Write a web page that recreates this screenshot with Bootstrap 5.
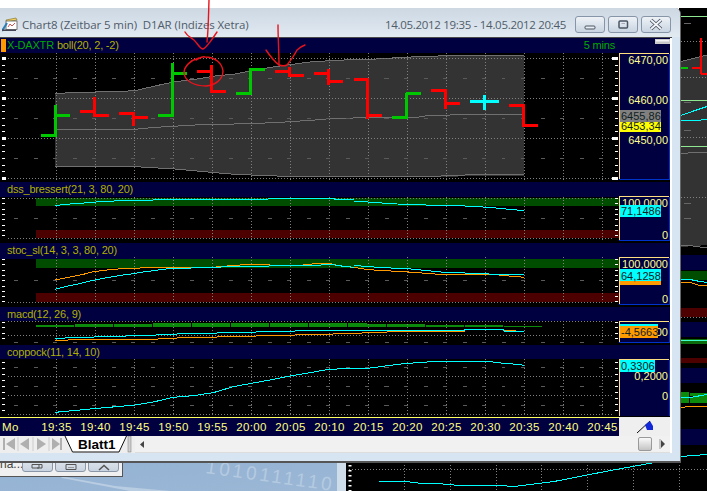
<!DOCTYPE html>
<html lang="de">
<head>
<meta charset="utf-8">
<title>Chart8</title>
<link rel="stylesheet" href="https://cdn.jsdelivr.net/npm/bootstrap@5.3.0/dist/css/bootstrap.min.css">
<style>
html,body{margin:0;background:#fff;}
.scene{position:relative;width:707px;height:491px;overflow:hidden;font-family:"Liberation Sans",sans-serif;font-size:11px;}
.backdrop{position:absolute;left:0;top:0;width:707px;height:491px;}
.oldwin{position:absolute;left:0;top:445px;width:123px;height:32px;background:#f0f0f0;border-right:1px solid #555;border-bottom:1px solid #555;color:#444;font-size:12px;gap:2px;padding-bottom:4px;}
.oldname{width:20px;line-height:14px;margin-bottom:1px;}
.oldbtn{width:31px;height:24px;border:1px solid #8a97a8;border-radius:0 0 3px 3px;background:linear-gradient(#f4f6f9,#c9d4e0);}
.mainwin{position:absolute;left:0;top:8px;width:681px;height:455px;background:#d7e4f1;border-right:1px solid #666;border-bottom:2px solid #555;border-top-right-radius:6px;}
.capbar{height:29px;padding:4px 9px 0 2px;background:linear-gradient(#cdd8e3,#e1e9f1);color:#4f5c69;font-family:"Open Sans",sans-serif;font-size:11.5px;border-top-right-radius:6px;}
.captxt{white-space:pre;letter-spacing:-.1px;}
.capdate{white-space:pre;letter-spacing:-.3px;margin-right:9px;margin-left:auto;}
.capbtns{gap:3px;}
.capbtn{width:30px;height:17px;padding:0;line-height:0;border:1px solid #8795a8;border-radius:3px;background:linear-gradient(#eef2f6,#c9d5e2);}
.capbtn:hover{border-color:#8795a8;background:#dfe6ee;}
.client{width:672px;background:#fff;padding-right:2px;border-top:1px solid #4a4a4a;}
.chart{background:#000;width:670px;}
.phead{background:#000040;color:#b0b000;padding-left:7px;letter-spacing:-.2px;white-space:nowrap;}
.h15{height:15px;line-height:15px;}
.h14{height:14px;line-height:14px;}
.flagmark{width:5px;height:13px;background:#ff9a00;margin:0 1px 0 -6px;}
.gtxt{color:#00aa00;}
.bolltxt{margin-left:3px;}
.minibtn{width:15px;height:5px;margin:1px 0 0 40px;background:linear-gradient(#fff,#bbb);border:1px solid #ccc;}
.timerow{height:19px;}
.timeaxis{width:619px;background:#000040;border-top:1px solid #ffff60;color:#ffff80;padding-top:2px;overflow:hidden;letter-spacing:.35px;font-size:11.5px;line-height:14px;}
.timeaxis span{flex:0 0 39px;text-align:center;}
.timeaxis .mo{flex:0 0 37px;text-align:left;padding-left:2px;}
.corner{width:51px;background:#efefef;}
.tabrow{height:17px;background:#eee;width:670px;}
.track{background:#f1f1f1;border-bottom:1px solid #ddd;}
.thumb{width:14px;height:14px;border:1px solid #999;border-radius:2px;background:linear-gradient(#fafafa,#c4c4c4);margin-right:6px;}
svg{display:block;}
.plot text,.axis text{font-family:"Liberation Sans",sans-serif;font-size:11px;}
.vg{stroke:#808080;stroke-dasharray:1 2;fill:none;}
.dh{stroke:#5a5a5a;stroke-dasharray:4 15.5;fill:none;}
.tk{stroke:#fff;stroke-width:3;fill:none;}
.ln{fill:none;stroke-width:1;vector-effect:non-scaling-stroke;}
.cy{stroke:#00ffff;}
.or{stroke:#ff9a00;}
.gy{stroke:#707070;}
.bar{fill:none;stroke-width:3;}
.rd{stroke:#ff0000;}
.gn{stroke:#00c800;}
.cb{stroke:#00ffff;}
.lbl{fill:#ffff90;text-anchor:end;}
.dk{fill:#102020;}
.hand{fill:none;stroke:#e8141c;stroke-width:1.4;stroke-linecap:round;stroke-linejoin:round;}
.anno{position:absolute;left:0;top:0;width:707px;height:491px;pointer-events:none;}
</style>
</head>
<body>
<div class="scene">

<svg class="backdrop" viewBox="0 0 707 491" aria-hidden="true">
  <defs><linearGradient id="wall" x1="0" y1="0" x2="1" y2="1"><stop offset="0" stop-color="#93b2d3"/><stop offset="1" stop-color="#9cb7d6"/></linearGradient></defs>
  <rect x="0" y="462" width="340" height="29" fill="url(#wall)"/>
  <path d="M60 476L115 486L170 491H130L62 478Z" fill="#b9cde2"/>
  <text x="205" y="473" font-family="Liberation Sans" font-size="19" fill="#b4cae0" letter-spacing="3" transform="rotate(8 205 473)">1010111110</text>
  <rect x="337" y="462" width="10" height="29" fill="#cfdce9"/>
  <rect x="346" y="462" width="361" height="29" fill="#000"/>
  <path d="M349 469.500H707" class="vg"/>
  <path d="M404.500 462V491M450.500 462V491M496.500 462V491M541.500 462V491M587.500 462V491M633.500 462V491M679.500 462V491" class="vg"/>
  <path d="M350 465V491" class="tk" stroke-dasharray="1.500 3.500"/>
  <path d="M379 481.500H406L422 483.500H437L460 485.500H500L514 486.500L530 484.500L554 481.500L587 475L624 468L652 463L670 461" class="cy" fill="none" shape-rendering="crispEdges"/>
  <rect x="679" y="8" width="28" height="454" fill="#000"/>
  <g shape-rendering="crispEdges">
    <path d="M681 61.500L707 55V245L681 247Z" fill="#333"/>
    <path d="M681 61.500L707 55" class="gy"/>
    <path d="M681 153.500L696 152.500H707" class="gy"/>
    <path d="M681 245.500H690L700 247H707" class="gy"/>
    <path d="M681 41.500H707M681 77.500H707M681 137.500H707M681 197.500H707" class="vg"/>
    <path d="M684 23.500H691M684 102.500H691M684 130.500H691M684 203.500H691M684 218.500H691" stroke="#666"/>
    <path d="M681 16.500H707M681 100.500H707M681 146.500H707" stroke="#90e890"/>
    <path d="M681 115.500L695 110.500L707 106.500" class="cy"/>
    <path d="M681 120.500H695L707 119.500" class="cy"/>
    <path d="M681 68H688" stroke="#00c800" stroke-width="2"/>
    <path d="M692 68H701M701 38V74M701 74H707" stroke="#f00" stroke-width="2" fill="none"/>
    <rect x="681" y="255" width="26" height="15" fill="#000040"/>
    <rect x="681" y="271" width="26" height="9" fill="#004d00"/>
    <path d="M681 279.500H690L700 281.500L707 282.500" class="cy"/>
    <path d="M681 282.500H690L700 285.500H707" class="or"/>
    <rect x="681" y="308" width="26" height="9" fill="#4d0000"/>
    <path d="M681 317.500H707" class="vg"/>
    <rect x="681" y="322" width="26" height="15" fill="#000040"/>
    <rect x="681" y="339" width="26" height="5" fill="#0b6a0b"/>
    <path d="M681 340.500H707" stroke="#40ffd0"/>
    <rect x="681" y="358" width="26" height="5" fill="#4d0000"/>
    <rect x="681" y="368" width="26" height="15" fill="#000040"/>
    <rect x="681" y="392" width="8" height="11" fill="#0b8a0b"/>
    <rect x="690" y="393" width="17" height="10" fill="#0b8a0b"/>
    <path d="M681 397.500H690L707 394.500" class="cy"/>
    <path d="M681 407.500L690 406.500H707" class="or"/>
    <rect x="681" y="429" width="26" height="16" fill="#000040"/>
    <path d="M681 456.500L707 454.500" class="cy"/>
  </g>
</svg>

<div class="oldwin d-flex align-items-end">
  <span class="oldname flex-shrink-0">na...</span>
  <span class="oldbtn flex-shrink-0 d-flex align-items-end justify-content-center"><svg width="14" height="7" viewBox="0 0 14 7"><path d="M1 .5H8V4H1ZM6 4H11V.5H8" fill="none" stroke="#555"/></svg></span>
  <span class="oldbtn flex-shrink-0 d-flex align-items-end justify-content-center"><svg width="12" height="7" viewBox="0 0 12 7"><path d="M1 .5H11V5.500H1Z" fill="none" stroke="#555"/><path d="M3 3.500H9" stroke="#999"/></svg></span>
  <span class="oldbtn flex-shrink-0 d-flex align-items-end justify-content-center"><svg width="12" height="7" viewBox="0 0 12 7"><path d="M1 6L6 1.500L11 6" fill="none" stroke="#555" stroke-width="1.500"/></svg></span>
</div>

<div class="mainwin d-flex flex-column">
  <div class="capbar d-flex align-items-center">
    <svg width="16" height="15" viewBox="0 0 16 15" class="me-1 flex-shrink-0">
      <path d="M4 3L14 1L15 3L5 5Z" fill="#f4d25a" stroke="#7b6a2a" stroke-width=".6"/>
      <rect x="4" y="4" width="11" height="8.500" fill="#fff" stroke="#5a5a5a" stroke-width=".8"/>
      <path d="M6 10L8 7L10 9L13 6" fill="none" stroke="#d04040" stroke-width=".9"/>
      <path d="M0 14L5 6" stroke="#2a7fb5" stroke-width="2"/>
      <rect x="0" y="12.500" width="14" height="1.500" fill="#445"/>
    </svg>
    <span class="captxt">Chart8 (Zeitbar 5 min)  D1AR (Indizes Xetra)</span>
    <span class="capdate">14.05.2012 19:35 - 14.05.2012 20:45</span>
    <div class="d-flex capbtns">
      <button class="btn capbtn" aria-label="min"><svg width="28" height="15" viewBox="0 0 28 15"><rect x="9" y="9" width="10" height="3" rx="1" fill="#e9eef4" stroke="#4a5563"/></svg></button>
      <button class="btn capbtn" aria-label="max"><svg width="28" height="15" viewBox="0 0 28 15"><rect x="10" y="4" width="8.500" height="7" rx="1" fill="none" stroke="#4a5563" stroke-width="1.500"/><path d="M12.500 6.500H16" stroke="#aab"/></svg></button>
      <button class="btn capbtn" aria-label="close"><svg width="28" height="15" viewBox="0 0 28 15"><path d="M9 3L19 12M19 3L9 12" stroke="#4a5563" stroke-width="3.600"/><path d="M9 3L19 12M19 3L9 12" stroke="#f3f5f8" stroke-width="1.800"/></svg></button>
    </div>
  </div>

  <div class="client">
    <div class="chart">
      <!-- pane 1 -->
      <div class="phead h15 d-flex">
        <span class="flagmark align-self-center flex-shrink-0"></span>
        <span class="gtxt">X-DAXTR</span><span class="bolltxt">boll(20, 2, -2)</span>
        <span class="gtxt ms-auto">5 mins</span>
        <span class="minibtn flex-shrink-0"></span>
      </div>
      <div class="d-flex">
        <svg class="plot flex-shrink-0" width="619" height="129" viewBox="0 53 619 129" shape-rendering="crispEdges">
          <g transform="scale(.33333)">
            <path d="M165 280L225 278L285 276L345 275L405 272L465 258L525 245L585 238L645 228L705 222L765 210L825 200L885 192L945 184L1005 182L1062 178L1131 177L1191 173L1276 169L1396 166L1572 166V529H1396L1276 532L1062 530L825 528L705 523L645 518L525 507L405 500H165Z" fill="#333"/>
            <path class="ln gy" d="M165 280L225 278L285 276L345 275L405 272L465 258L525 245L585 238L645 228L705 222L765 210L825 200L885 192L945 184L1005 182L1062 178L1131 177L1191 173L1276 169L1396 166L1572 166"/>
            <path class="ln gy" d="M165 388H405L465 382L585 375L705 372L825 368L945 360L1000 355L1062 354H1240L1276 348L1350 345H1572"/>
            <path class="ln gy" d="M165 500H405L525 507L645 518L705 523L825 528L1062 530H1276L1396 525H1572"/>
          </g>
          <g>
            <path class="vg" d="M56.500 53V182M95.500 53V182M134.500 53V182M173.500 53V182M212.500 53V182M251.500 53V182M290.500 53V182M329.500 53V182M368.500 53V182M407.500 53V182M446.500 53V182M485.500 53V182M524.500 53V182M563.500 53V182M602.500 53V182"/>
            <path class="vg" d="M8 58.500H614M8 98.500H614M8 138.500H614M8 178.500H614"/>
            <path class="dh" d="M14 78.500H612M14 118.500H612M14 158.500H612"/>
            <path class="tk" stroke-dasharray="1 5.670" d="M3.500 58V179M616 58V179"/>
            <path class="tk" d="M2 58.500H6M2 98.500H6M2 138.500H6M2 178.500H6M612 58.500H618M612 98.500H618M612 138.500H618M612 178.500H618" stroke-width="1"/>
            <path class="bar gn" d="M41 135.300H55.300M55.300 105V137M55.300 115.300H70"/>
            <path class="bar rd" d="M80 111.300H94.700M94.700 97V117M94.700 115.300H109"/>
            <path class="bar rd" d="M119 113.300H133.300M133.300 111.700V126M133.300 117.300H148"/>
            <path class="bar gn" d="M158 115.300H172.300M172.300 63V116.700M172.300 73H187"/>
            <path class="bar rd" d="M197 71.300H211.700M211.700 65V93M211.700 91.300H226"/>
            <path class="bar gn" d="M236 93.700H250.300M250.300 68.300V94.500M250.300 69.300H265"/>
            <path class="bar rd" d="M275 71.300H289.300M289.300 67.300V77.300M289.300 75.300H304"/>
            <path class="bar rd" d="M314 73.300H328.300M328.300 69.300V85.300M328.300 81.300H343"/>
            <path class="bar rd" d="M354 79.300H367.700M367.700 78.300V119.300M367.700 115.300H382"/>
            <path class="bar gn" d="M392 117.300H406.300M406.300 93.300V119.300M406.300 93.300H421"/>
            <path class="bar rd" d="M431 90.700H445.300M445.300 89.300V109.300M445.300 103.300H460"/>
            <path class="bar cb" d="M470 101.300H499M484.300 95.300V110"/>
            <path class="bar rd" d="M509 105.300H523.700M523.700 104.300V126.700M523.700 125.300H538"/>
          </g>
        </svg>
        <svg class="axis flex-shrink-0" width="51" height="129" viewBox="619 53 51 129" shape-rendering="crispEdges">
          <rect x="619" y="53" width="51" height="126.500" fill="#000040"/>
          <path d="M619.500 53.500H669M619.500 53V179" stroke="#ffdf80" fill="none"/>
          <path d="M669.500 54V179M619 179H670" stroke="#0033cc" fill="none"/>
          <text class="lbl" x="668" y="63.500">6470,00</text>
          <text class="lbl" x="668" y="103.500">6460,00</text>
          <text class="lbl" x="668" y="143.500">6450,00</text>
          <rect x="620" y="109.500" width="41" height="12.500" fill="#808080"/>
          <text class="dk" x="621" y="120">6455,86</text>
          <rect x="620" y="122" width="41" height="10" fill="#ffff00"/>
          <text class="dk" x="621" y="130">6453,34</text>
        </svg>
      </div>

      <!-- pane 2 -->
      <div class="phead h14">dss_bressert(21, 3, 80, 20)</div>
      <div class="d-flex">
        <svg class="plot flex-shrink-0" width="619" height="47" viewBox="0 196 619 47" shape-rendering="crispEdges">
          <rect x="0" y="196" width="619" height="1" fill="#000040"/>
          <rect x="36" y="198" width="583" height="8" fill="#004d00"/>
          <rect x="36" y="230" width="583" height="7.500" fill="#4d0000"/>
          <path class="vg" d="M56.500 197V240M95.500 197V240M134.500 197V240M173.500 197V240M212.500 197V240M251.500 197V240M290.500 197V240M329.500 197V240M368.500 197V240M407.500 197V240M446.500 197V240M485.500 197V240M524.500 197V240M563.500 197V240M602.500 197V240"/>
          <path class="vg" d="M8 198.500H614M8 238.500H614"/>
          <path class="dh" d="M14 218.500H612"/>
          <path class="tk" stroke-dasharray="1 4.300" d="M3.500 198V239M616 198V239"/>
          <g transform="translate(0 180) scale(.33333)"><path class="ln cy" d="M165 77L195 73L225 71L265 68L312 64L372 62L460 60L520 58H640L810 57L925 56H1005V60H1062"/></g>
          <g transform="translate(354 180) scale(.33333)"><path class="ln cy" d="M0 63L70 68L130 72L215 75L333 78L405 82L435 85L465 88L511 92"/></g>
        </svg>
        <svg class="axis flex-shrink-0" width="51" height="47" viewBox="619 196 51 47" shape-rendering="crispEdges">
          <rect x="619" y="196" width="51" height="45" fill="#000040"/>
          <path d="M619.500 196.500H669M619.500 196V241" stroke="#ffdf80" fill="none"/>
          <path d="M669.500 197V241M619 240.500H670" stroke="#0033cc" fill="none"/>
          <text class="lbl" x="668" y="207">100,0000</text>
          <text class="lbl" x="668" y="238.500">0</text>
          <rect x="620" y="205" width="41" height="12" fill="#00ffff"/>
          <text class="dk" x="621" y="215">71,1486</text>
        </svg>
      </div>

      <!-- pane 3 -->
      <div class="phead h14">stoc_sl(14, 3, 3, 80, 20)</div>
      <div class="d-flex">
        <svg class="plot flex-shrink-0" width="619" height="50" viewBox="0 257 619 50" shape-rendering="crispEdges">
          <rect x="0" y="257" width="619" height="2" fill="#000040"/>
          <rect x="36" y="259" width="583" height="9" fill="#004d00"/>
          <rect x="36" y="293" width="583" height="9" fill="#4d0000"/>
          <path class="vg" d="M56.500 257V304M95.500 257V304M134.500 257V304M173.500 257V304M212.500 257V304M251.500 257V304M290.500 257V304M329.500 257V304M368.500 257V304M407.500 257V304M446.500 257V304M485.500 257V304M524.500 257V304M563.500 257V304M602.500 257V304"/>
          <path class="vg" d="M8 302.500H614"/>
          <path class="dh" d="M14 280.500H612"/>
          <path class="tk" stroke-dasharray="1 4.300" d="M3.500 259V303M616 259V303"/>
          <g transform="translate(0 180) scale(.33333)">
            <path class="ln or" d="M165 300L190 295L225 288L250 283L275 276L305 272L340 268L380 265L460 263L505 264L640 262L655 260L695 257L735 254L810 253V257H895L925 253L960 250L995 252L1015 257L1035 260L1062 262"/>
            <path class="ln cy" d="M165 328L195 320L225 314L250 308L275 302L310 295L340 290L370 285L400 281L430 276L460 272L490 268L515 265L575 264L640 262L690 260L810 258L925 256L1000 254L1015 257L1062 262"/>
          </g>
          <g transform="translate(354 180) scale(.33333)">
            <path class="ln or" d="M0 262L30 267L70 271L130 274L180 277L215 280L255 283L333 283L405 283L435 285L465 288L490 290L511 292"/>
            <path class="ln cy" d="M0 257L40 259L70 262L130 265L170 267L200 270L230 273L260 276L333 279L405 282L450 284L511 284"/>
          </g>
        </svg>
        <svg class="axis flex-shrink-0" width="51" height="50" viewBox="619 257 51 50" shape-rendering="crispEdges">
          <rect x="619" y="257" width="51" height="48" fill="#000040"/>
          <path d="M619.500 257.500H669M619.500 257V305" stroke="#ffdf80" fill="none"/>
          <path d="M669.500 258V305M619 304.500H670" stroke="#0033cc" fill="none"/>
          <text class="lbl" x="668" y="268">100,0000</text>
          <text class="lbl" x="668" y="302.500">0</text>
          <rect x="620" y="281" width="41" height="3.500" fill="#ff9a00"/>
          <rect x="620" y="269" width="41" height="12" fill="#00ffff"/>
          <text class="dk" x="621" y="279.500">64,1258</text>
        </svg>
      </div>

      <!-- pane 4 -->
      <div class="phead h14">macd(12, 26, 9)</div>
      <div class="d-flex">
        <svg class="plot flex-shrink-0" width="619" height="24" viewBox="0 321 619 24" shape-rendering="crispEdges">
          <g transform="translate(0 180) scale(.33333)" fill="#0b8a0b">
            <rect x="108" y="436" width="114" height="5"/><rect x="225" y="432" width="115" height="9"/><rect x="343" y="432" width="113" height="9"/><rect x="459" y="429" width="113" height="12"/><rect x="576" y="429" width="113" height="12"/><rect x="693" y="429" width="113" height="12"/><rect x="810" y="429" width="114" height="12"/><rect x="927" y="429" width="114" height="12"/><rect x="1044" y="429" width="58" height="12"/>
          </g>
          <g transform="translate(354 180) scale(.33333)" fill="#0b8a0b">
            <rect x="0" y="432" width="96" height="9"/><rect x="100" y="432" width="113" height="9"/><rect x="216" y="436" width="114" height="5"/><rect x="333" y="436" width="114" height="5"/><rect x="450" y="438" width="115" height="3"/>
          </g>
          <path class="vg" d="M56.500 321V343M95.500 321V343M134.500 321V343M173.500 321V343M212.500 321V343M251.500 321V343M290.500 321V343M329.500 321V343M368.500 321V343M407.500 321V343M446.500 321V343M485.500 321V343M524.500 321V343M563.500 321V343M602.500 321V343"/>
          <path class="vg" d="M8 321.500H614M8 335.500H614"/>
          <path class="dh" d="M14 342.500H612"/>
          <path class="tk" stroke-dasharray="1 4.300" d="M3.500 322V342M616 322V342"/>
          <g transform="translate(0 180) scale(.33333)">
            <path class="ln or" d="M165 482L225 479H458L490 475L575 473L690 470L810 467L925 464L1040 461H1062"/>
            <path class="ln cy" d="M165 475L225 473L340 469L458 466L490 463L575 461L690 458L810 455L925 452H1062"/>
          </g>
          <g transform="translate(354 180) scale(.33333)">
            <path class="ln or" d="M0 460L100 456H333V450H450L511 455"/>
            <path class="ln cy" d="M0 452H333V450H450V453L511 454"/>
          </g>
        </svg>
        <svg class="axis flex-shrink-0" width="51" height="24" viewBox="619 321 51 24" shape-rendering="crispEdges">
          <rect x="619" y="321" width="51" height="22" fill="#000040"/>
          <path d="M619.500 321.500H669M619.500 321V343" stroke="#ffdf80" fill="none"/>
          <path d="M669.500 322V343M619 342.500H670" stroke="#0033cc" fill="none"/>
          <text class="lbl" x="668" y="336">100,0000</text>
          <rect x="620" y="324" width="38" height="2" fill="#00ffff"/>
          <rect x="620" y="325.500" width="38" height="12.500" fill="#ff9a00"/>
          <text class="dk" x="621" y="336">-4,5663</text>
        </svg>
      </div>

      <!-- pane 5 -->
      <div class="phead h14">coppock(11, 14, 10)</div>
      <div class="d-flex">
        <svg class="plot flex-shrink-0" width="619" height="58" viewBox="0 359 619 58" shape-rendering="crispEdges">
          <path class="vg" d="M56.500 359V415M95.500 359V415M134.500 359V415M173.500 359V415M212.500 359V415M251.500 359V415M290.500 359V415M329.500 359V415M368.500 359V415M407.500 359V415M446.500 359V415M485.500 359V415M524.500 359V415M563.500 359V415M602.500 359V415"/>
          <path class="vg" d="M8 376.500H614M8 395.500H614M8 414.500H614"/>
          <path class="dh" d="M14 367.500H612M14 386.500H612M14 405.500H612"/>
          <path class="tk" stroke-dasharray="1 5" d="M3.500 362V415M616 362V415"/>
          <g transform="translate(0 340) scale(.33333)"><path class="ln cy" d="M165 217L240 210L290 205L350 200L405 195L460 186L520 172L580 167L640 158L700 140L755 130L820 118L870 108L930 98L985 88L1062 85"/></g>
          <g transform="translate(354 340) scale(.33333)"><path class="ln cy" d="M0 85L50 84L100 77L150 71L190 68L250 64L400 64L440 69L490 73L511 76"/></g>
        </svg>
        <svg class="axis flex-shrink-0" width="51" height="58" viewBox="619 359 51 58" shape-rendering="crispEdges">
          <rect x="619" y="359" width="51" height="57" fill="#000040"/>
          <path d="M619.500 359.500H669M619.500 359V416" stroke="#ffdf80" fill="none"/>
          <path d="M669.500 360V416" stroke="#0033cc" fill="none"/>
          <text class="lbl" x="668" y="380">0,2000</text>
          <text class="lbl" x="668" y="399.500">0</text>
          <rect x="620" y="360" width="35" height="12" fill="#00ffff"/>
          <text class="dk" x="621" y="370">0,3306</text>
        </svg>
      </div>

      <div class="timerow d-flex">
        <div class="timeaxis d-flex flex-shrink-0">
          <span class="mo">Mo</span>
          <span>19:35</span><span>19:40</span><span>19:45</span><span>19:50</span><span>19:55</span><span>20:00</span><span>20:05</span><span>20:10</span><span>20:15</span><span>20:20</span><span>20:25</span><span>20:30</span><span>20:35</span><span>20:40</span><span>20:45</span>
        </div>
        <div class="corner d-flex align-items-center justify-content-center">
          <svg width="24" height="16" viewBox="0 0 24 16"><path d="M4 14L17 2" stroke="#111" stroke-width="1"/><path d="M12 6L17 2L20 7V11H14Z" fill="#1228d8"/></svg>
        </div>
      </div>
    </div>

    <div class="tabrow d-flex">
      <svg width="135" height="17" viewBox="0 0 135 17" class="flex-shrink-0">
        <g fill="#b0b0b0">
          <path d="M3 2h2v12H3zM15 2v12L6 8z"/>
          <path d="M29 2v12L20 8z"/>
          <path d="M37 2v12L46 8z"/>
          <path d="M52 2v12L60 8zM60 2h2v12h-2z"/>
        </g>
        <path d="M18 1V15M33 1V15M49 1V15" stroke="#ccc"/>
        <path d="M65 0L72.500 16H119L126.500 0" fill="#fff" stroke="#111" stroke-width="1"/>
        <text x="78" y="12.500" font-family="Liberation Sans" font-weight="700" font-size="13.500" fill="#000">Blatt1</text>
        <rect x="128" y="0" width="3" height="16" fill="#d0d0d0" stroke="#777" stroke-width=".5"/>
      </svg>
      <div class="track flex-grow-1 d-flex align-items-center justify-content-end">
        <svg width="8" height="9" viewBox="0 0 8 9" class="me-auto ms-1"><path d="M1 4.500L5 1V8Z" fill="#444"/></svg>
        <span class="thumb flex-shrink-0"></span>
        <svg width="8" height="10" viewBox="0 0 8 10" class="me-1 flex-shrink-0"><path d="M2 0V10" stroke="#999"/><path d="M3 1L7 5L3 9Z" fill="#444"/></svg>
      </div>
    </div>
  </div>
</div>

<svg class="anno" viewBox="0 0 707 491" aria-hidden="true">
  <path class="hand" d="M209 0C208.500 14 208.500 28 207 42"/>
  <path class="hand" d="M185 32C187 36 190 37 194 40C198 44 200 49 203 49C206 48 208 44 210 42C213 38 215 35 217 32"/>
  <path class="hand" d="M199 58C191 60 184 66 184 73C185 81 194 86 206 86C216 85 223 79 223 71C222 63 215 57 205 57C202 56 200 58 196 60"/>
  <path class="hand" d="M278 25C278 38 279 52 279 65"/>
  <path class="hand" d="M266 50C270 56 274 61 279 65C282 66 285 66 287 65C291 60 295 54 297 50C300 47 302 46 305 45"/>
</svg>

</div>
<script src="https://cdn.jsdelivr.net/npm/bootstrap@5.3.0/dist/js/bootstrap.bundle.min.js"></script>
</body>
</html>
